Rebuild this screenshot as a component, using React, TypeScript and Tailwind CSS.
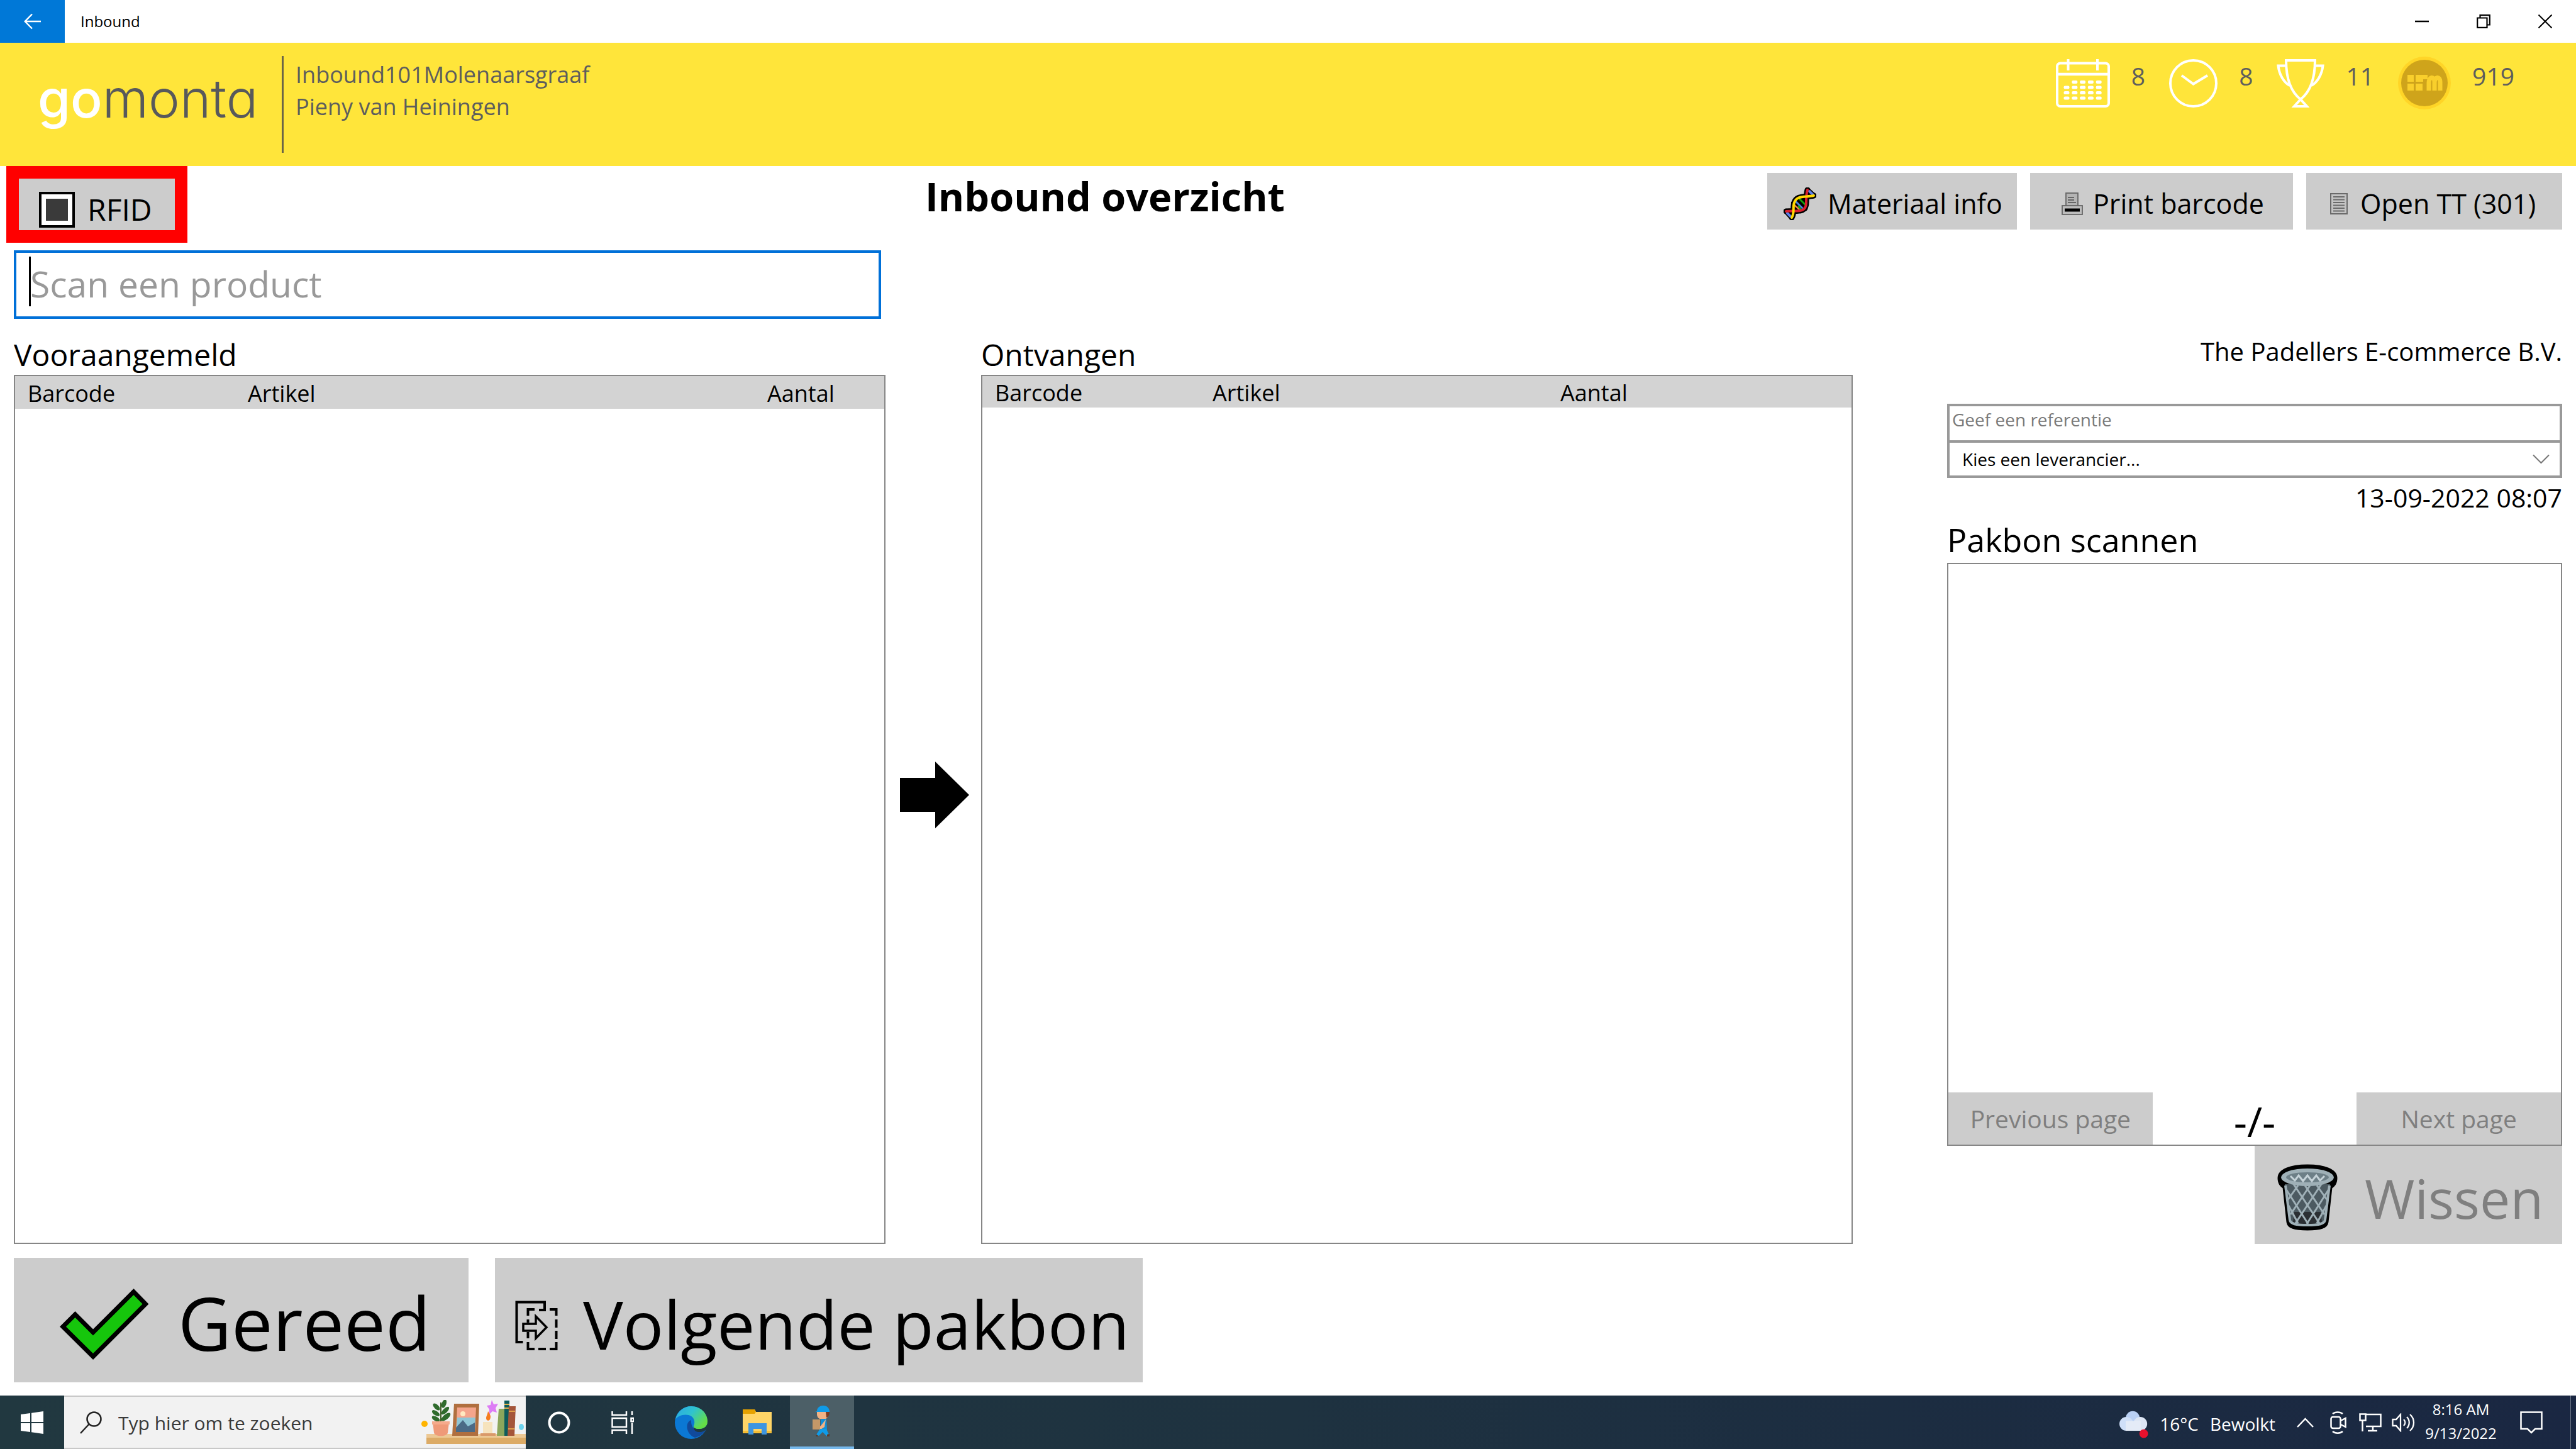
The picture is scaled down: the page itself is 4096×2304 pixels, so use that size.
import React from "react";

const winIcon = "block fill-none stroke-black";

function TitleBar() {
  return (
    <div className="flex h-[68px] items-stretch bg-white">
      <button aria-label="Back" className="flex w-[103px] items-center justify-center bg-[#0078d7]">
        <svg width="28" height="26" viewBox="0 0 28 26" className="fill-none stroke-white" strokeWidth="2.5">
          <path d="M27 13H2M13 1.5L1.8 13L13 24.5" />
        </svg>
      </button>
      <span className="ml-[25px] flex flex-1 items-center text-[24px] text-black">Inbound</span>
      <button aria-label="Minimize" className="flex w-[98px] items-center justify-center">
        <svg width="22" height="22" viewBox="0 0 22 22" className={winIcon} strokeWidth="2.5">
          <path d="M0 11H22" />
        </svg>
      </button>
      <button aria-label="Restore" className="flex w-[98px] items-center justify-center">
        <svg width="22" height="22" viewBox="0 0 22 22" className={winIcon} strokeWidth="2.2">
          <path d="M1.2 5.5H16.5V20.8H1.2ZM5.5 5V1.2H20.8V16.5H17" />
        </svg>
      </button>
      <button aria-label="Close" className="flex w-[98px] items-center justify-center">
        <svg width="22" height="22" viewBox="0 0 22 22" className={winIcon} strokeWidth="2">
          <path d="M0.5 0.5L21.5 21.5M21.5 0.5L0.5 21.5" />
        </svg>
      </button>
    </div>
  );
}

function CalendarIcon() {
  const dots: React.ReactNode[] = [];
  for (let r = 0; r < 4; r++)
    for (let c = 0; c < 5; c++)
      if (r > 0 || c > 0)
        dots.push(<rect key={`${r}-${c}`} x={12.5 + c * 12.8} y={34 + r * 8.5} width="9" height="5" rx="2" />);
  return (
    <svg width="86" height="77" viewBox="0 0 86 77" className="fill-white stroke-none">
      <rect x="2" y="6.5" width="82" height="68.5" rx="5" className="fill-none stroke-white" strokeWidth="4" />
      <path d="M2 24H84" className="stroke-white" strokeWidth="4.5" />
      <path d="M19.500 0V18M66 0V18" className="stroke-white" strokeWidth="4" />
      {dots}
    </svg>
  );
}

function ClockIcon() {
  return (
    <svg width="77" height="77" viewBox="0 0 77 77" className="fill-none stroke-white" strokeWidth="4">
      <circle cx="38.500" cy="38.500" r="36.500" />
      <path d="M20 26L38.500 39.500L61 26" />
    </svg>
  );
}

function TrophyIcon() {
  return (
    <svg width="76" height="77" viewBox="0 0 76 77" className="fill-none stroke-white" strokeWidth="4">
      <path d="M15 2H61C61 34 52 53 38 64C24 53 15 34 15 2Z" />
      <path d="M15 10.500H2.500C4 24 11 37 21 42M61 10.500H73.500C72 24 65 37 55 42" />
      <path d="M38 64L28 75H48Z" />
    </svg>
  );
}

function CoinIcon() {
  return (
    <svg width="84" height="84" viewBox="0 0 84 84">
      <circle cx="42" cy="42" r="42" fill="#ffd527" />
      <circle cx="42" cy="42" r="37" fill="#cfa41b" />
      <g fill="#f9cf2c">
        <rect x="15" y="29" width="10" height="11" />
        <rect x="15" y="43" width="10" height="11" />
        <rect x="28" y="29" width="12" height="11" />
        <rect x="28" y="43" width="11" height="11" />
      </g>
      <path d="M49 54V42C49 31 58 31 58 40V54M58 42C58 31 67 31 67 40V54M38 32.500H47" fill="none" stroke="#f9cf2c" strokeWidth="7" />
    </svg>
  );
}

function Banner() {
  const stats = [
    { label: "Dagen", icon: <CalendarIcon />, value: "8" },
    { label: "Uren", icon: <ClockIcon />, value: "8" },
    { label: "Prijzen", icon: <TrophyIcon />, value: "11" },
    { label: "Munten", icon: <CoinIcon />, value: "919" },
  ];
  return (
    <header className="flex h-[196px] items-start justify-between bg-[#ffe53a] text-[#5d5d5d]">
      <div className="flex items-start">
        <div className="mt-[33px] w-[389px] shrink-0 pl-[60px] font-['Inter'] text-[84px] leading-[112px] font-light [font-feature-settings:'cv11'] text-[#58595b]">
          <span className="font-medium text-white">go</span>monta
        </div>
        <div className="mt-[21px] ml-[59px] h-[154px] w-[3px] bg-[#6b6546]" />
        <div className="mt-[25px] ml-[19px] text-[36px] leading-[51px]">
          <div>Inbound101Molenaarsgraaf</div>
          <div>Pieny van Heiningen</div>
        </div>
      </div>
      <ul className="mt-[22px] mr-[98px] flex items-start gap-[38px]">
        {stats.map((s) => (
          <li key={s.label} className="flex items-start gap-[34px]">
            <span className="flex h-[84px] items-center">{s.icon}</span>
            <span className="text-[39px] leading-[62px]">{s.value}</span>
          </li>
        ))}
      </ul>
    </header>
  );
}

function DnaIcon() {
  return (
    <svg width="52" height="52" viewBox="0 0 52 52" fill="none" strokeLinecap="round" strokeLinejoin="round">
      <path d="M4 38C20 36 36 42 36 24C36 14 36 10 38 4M13 48C18 40 14 32 17 24C21 12 34 16 48 13" stroke="#000" strokeWidth="9" />
      <path d="M38 4L48 13M4 38L13 48" stroke="#000" strokeWidth="8" />
      <path d="M16 25L27 37M20 20L34 34M25 17L36 27" stroke="#000" strokeWidth="8" />
      <path d="M41 6L47 12M6 41L11 46" stroke="#5b7fe8" strokeWidth="4" />
      <path d="M17 28L25 35" stroke="#f0803c" strokeWidth="2.500" />
      <path d="M19 22L31 34" stroke="#4a7fe0" strokeWidth="3" />
      <path d="M26 19L36 29M24 30L28 36" stroke="#13a10e" strokeWidth="3" />
      <path d="M38 4C36 10 36 14 36 24C36 42 20 36 4 38" stroke="#d81e2c" strokeWidth="4" />
      <path d="M13 48C18 40 14 32 17 24C21 12 34 16 48 13" stroke="#ffd800" strokeWidth="4" />
    </svg>
  );
}

function PrinterIcon() {
  return (
    <svg width="34" height="36" viewBox="0 0 34 36" fill="none" stroke="#666" strokeWidth="1.800">
      <rect x="7" y="1" width="19" height="21" fill="#b4b4b4" />
      <path d="M10 12H20M10 16H23M10 8H20" />
      <rect x="1" y="21" width="32" height="14" fill="#bdbdbd" />
      <path d="M5 28H29" stroke="#000" strokeWidth="5" />
    </svg>
  );
}

function DocIcon() {
  return (
    <svg width="28" height="34" viewBox="0 0 28 34" fill="none" stroke="#6a6a6a" strokeWidth="2">
      <rect x="1" y="1" width="26" height="32" fill="#c4c4c4" />
      <path d="M5 6H23M5 10.500H23M5 15H23M5 19.500H23M5 24H23M5 28.500H23" />
    </svg>
  );
}

function ToolButton(props: { icon: React.ReactNode; text: string; className: string }) {
  return (
    <button className={`flex h-[90px] items-center bg-[#cccccc] pt-[8px] text-[43px] leading-[60px] text-black ${props.className}`}>
      {props.icon}
      <span>{props.text}</span>
    </button>
  );
}

function ListTable(props: { title: string; barcode: string; artikel: string; head: string }) {
  return (
    <section className="flex flex-col">
      <h2 className="mt-[25px] text-[48px] leading-[64px]">{props.title}</h2>
      <div className="flex-1 border-2 border-[#868686] bg-white">
        <table className="w-full table-fixed text-left text-[36px]">
          <thead>
            <tr className={`bg-[#d3d3d3] ${props.head}`}>
              <th className={`pt-[3px] pl-[20px] leading-[44px] font-normal ${props.barcode}`}>Barcode</th>
              <th className={`pt-[3px] pl-[20px] leading-[44px] font-normal ${props.artikel}`}>Artikel</th>
              <th className="pt-[3px] pl-[20px] leading-[44px] font-normal">Aantal</th>
            </tr>
          </thead>
        </table>
      </div>
    </section>
  );
}

function TrashIcon() {
  return (
    <svg width="98" height="106" viewBox="0 0 98 106">
      <path d="M49 3C22 3 4 10 4 22C4 31 8 34 12 37L18 92C19 100 28 103 49 103C70 103 79 100 80 92L86 37C90 34 94 31 94 22C94 10 76 3 49 3Z" fill="#000" stroke="#000" strokeWidth="5" />
      <path d="M13 32L21 89C22 95 30 97 49 97C68 97 76 95 77 89L85 32Z" fill="#4c5a61" />
      <path d="M28 76H70L72 92C60 97 38 97 26 92Z" fill="#2b2f33" />
      <g fill="none" stroke="#9fb0b7" strokeWidth="3">
        <path d="M14 34L21 89C22 95 30 97 49 97C68 97 76 95 77 89L84 34" strokeWidth="4" />
        <path d="M27 32L68 94M45 34L76 80M64 34L81 58M15 40L50 95M19 66L34 94" />
        <path d="M71 32L30 94M53 34L22 80M34 34L17 58M83 40L48 95M79 66L64 94" />
      </g>
      <ellipse cx="49" cy="21" rx="42" ry="14" fill="#9fb0b7" />
      <ellipse cx="49" cy="21" rx="34" ry="8" fill="#6d7f87" />
      <path d="M22 19L29 26L35 18L42 27L49 18L56 27L63 18L69 26L76 19" fill="none" stroke="#c5d2d8" strokeWidth="3" />
    </svg>
  );
}

function CheckIcon() {
  return (
    <svg width="142" height="114" viewBox="0 0 142 114">
      <path d="M5 60.500L24.500 41L53 69.500L117.500 5L136.500 24.500L53 108Z" fill="#16c60c" stroke="#000" strokeWidth="7" />
    </svg>
  );
}

function CopyIcon() {
  return (
    <svg width="68" height="80" viewBox="0 0 68 80" fill="none" stroke="#000" strokeWidth="4">
      <path d="M12.500 66H2.500V2.500H47V15H38" />
      <path d="M20.500 24V14H31M55 14H65.500V24M65.500 30V43M65.500 48V61M65.500 66V77H55M49 77H37M31 77H20.500V66M20.500 60V50M20.500 35V30" />
      <path d="M13 37H33V25L50 42.500L33 60V48H13Z" strokeWidth="3.500" />
    </svg>
  );
}

function PackingSlip() {
  return (
    <section className="flex flex-col">
      <div className="mt-[22px] text-right text-[40px] leading-[60px]">The Padellers E-commerce B.V.</div>
      <input
        aria-label="Referentie"
        placeholder="Geef een referentie"
        className="mt-[53px] block h-[62px] border-4 border-[#999999] bg-white px-[4px] pb-[12px] text-[28px] outline-none placeholder:text-[#7a7a7a]"
      />
      <div className="relative -mt-[4px]">
        <select
          aria-label="Leverancier"
          className="block h-[60px] w-full appearance-none border-4 border-[#999999] bg-white px-[20px] text-[28px] text-black outline-none"
        >
          <option>Kies een leverancier...</option>
        </select>
        <svg width="27" height="16" viewBox="0 0 27 16" className="pointer-events-none absolute top-[22px] right-[20px] fill-none stroke-[#777777]" strokeWidth="2">
          <path d="M1 1.500L13.500 14L26 1.500" />
        </svg>
      </div>
      <div className="text-right text-[41px] leading-[62px]">13-09-2022 08:07</div>
      <h2 className="mt-[4px] text-[52px] leading-[64px]">Pakbon scannen</h2>
      <div className="mt-[5px] flex flex-1 flex-col justify-end border-2 border-[#868686] bg-white">
        <div className="grid h-[83px] grid-cols-3">
          <button disabled className="bg-[#cccccc] pt-[2px] text-[39px] text-[#7f7f7f]">
            Previous page
          </button>
          <span className="pt-[15px] text-center text-[66px] leading-[60px]">-/-</span>
          <button disabled className="bg-[#cccccc] pt-[2px] text-[39px] text-[#7f7f7f]">
            Next page
          </button>
        </div>
      </div>
      <button disabled className="flex h-[156px] w-1/2 items-center self-end bg-[#cccccc] pt-[8px] pl-[35px] text-[86px] text-[#7f7f7f]">
        <TrashIcon />
        <span className="ml-[42px]">Wissen</span>
      </button>
    </section>
  );
}

function ShelfArt() {
  return (
    <svg width="166" height="72" viewBox="0 0 166 72">
      <circle cx="5" cy="38" r="5" fill="#ffb400" />
      <rect x="8" y="54" width="158" height="8" fill="#ecc894" />
      <rect x="8" y="60" width="158" height="10" fill="#dcab66" />
      <path d="M31 36V4" stroke="#3b5b23" strokeWidth="2" />
      <g fill="#2f6b2c">
        <ellipse cx="36" cy="6" rx="3.500" ry="7" transform="rotate(20 36 6)" />
        <ellipse cx="24" cy="11" rx="3.500" ry="7" transform="rotate(-45 24 11)" />
        <ellipse cx="38" cy="17" rx="3.500" ry="8" transform="rotate(45 38 17)" />
        <ellipse cx="23" cy="21" rx="3.500" ry="7" transform="rotate(-55 23 21)" />
        <ellipse cx="39" cy="27" rx="4" ry="9" transform="rotate(50 39 27)" />
        <ellipse cx="23" cy="30" rx="3.500" ry="7" transform="rotate(-60 23 30)" />
      </g>
      <path d="M18 35H44L42 52C41 59 21 59 20 52Z" fill="#ef9a78" />
      <rect x="17" y="34" width="28" height="5" fill="#f5ab8c" />
      <path d="M52 6H92L90 57H49Z" fill="#b06f3f" />
      <path d="M57 12H87L85 51H55Z" fill="#f4a58c" />
      <path d="M57 28H86L85 51H55Z" fill="#8fc6d6" />
      <path d="M55 44L66 32L74 42L85 36V51H55Z" fill="#4b6a86" />
      <circle cx="66" cy="22" r="4" fill="#ffe9c0" />
      <path d="M112 0L115 7L122 6L118 13L120 20L113 18L108 23L108 15L104 9L110 8Z" fill="#dd7cf5" />
      <rect x="98" y="35" width="15" height="21" fill="#f6e3bd" />
      <rect x="94" y="53" width="24" height="4" fill="#d9996a" />
      <path d="M106 18C110 24 111 26 109 31C107 34 103 33 103 29C103 26 105 24 106 18Z" fill="#f57c1f" />
      <path d="M123 14H133V57H120Z" fill="#8ca65c" />
      <rect x="132" y="1" width="8" height="56" fill="#0f5b5c" />
      <path d="M132 7H140M132 13H140" stroke="#e0b04a" strokeWidth="2" />
      <path d="M139 10H150L148 57H137Z" fill="#a4553a" />
      <path d="M139 18H149M138 46H148" stroke="#e0a04a" strokeWidth="2" />
      <ellipse cx="159" cy="43" rx="4" ry="5" fill="#6ed3ee" />
    </svg>
  );
}

function EdgeIcon() {
  return (
    <svg width="52" height="52" viewBox="0 0 52 52">
      <defs>
        <linearGradient id="edgeTop" x1="0" y1="0" x2="1" y2="0.6">
          <stop offset="0" stopColor="#2ba7e6" />
          <stop offset="0.5" stopColor="#2fc3cf" />
          <stop offset="1" stopColor="#66dd45" />
        </linearGradient>
      </defs>
      <circle cx="26" cy="26" r="26" fill="#0b78d4" />
      <path d="M1 21C4 8 14 0 26 0C41 0 52 11 52 24C52 32 46 36 39 36C33 36 29 34 30 31C32 28 33 17 22 14C13 12 4 16 1 21Z" fill="url(#edgeTop)" />
      <path d="M26 22C16 25 17 44 32 50C40 48 46 43 49 38C38 43 25 38 26 22Z" fill="#114a9b" />
      <path d="M52 24C52 32 46 36 39 36C33 36 29 34 30 31C28 41 40 44 49 38L54 34Z" fill="#203840" />
      <path d="M52 24C52 32 46 36 39 36C33 36 29 34 30 31C30 33 38 34 44 32C49 30 52 27 52 24Z" fill="#5fdc48" />
    </svg>
  );
}

function CourierIcon() {
  return (
    <svg width="32" height="50" viewBox="0 0 32 50">
      <path d="M8 9C8 3 13 0 18 0C24 0 28 4 28 10L26 12L5 10Z" fill="#0f9be8" />
      <path d="M8 10H25V16C25 20 22 22 17 22C12 22 8 19 8 14Z" fill="#f0b285" />
      <path d="M22 10H28C28 15 26 18 23 19Z" fill="#7a3b22" />
      <path d="M14 21H23L24 38H14Z" fill="#0f8fd8" />
      <path d="M22 22L20 34L12 39L10 36L15 31Z" fill="#f0b285" />
      <rect x="1" y="22" width="12" height="16" fill="#c49868" />
      <path d="M13 37H23L27 46L24 49L17 42L11 48L7 46Z" fill="#0f9be8" />
      <path d="M24 46L28 45L28 49H24ZM7 46L11 49H6Z" fill="#5c3a28" />
    </svg>
  );
}

const task = "flex w-[105px] items-center justify-center";

function Taskbar() {
  return (
    <footer className="flex h-[85px] items-stretch bg-linear-to-r from-[#213840] via-[#1e3240] to-[#1a2742] text-white">
      <button aria-label="Start" className="flex w-[102px] items-center justify-center">
        <svg width="36" height="36" viewBox="0 0 36 36" fill="#fff">
          <path d="M0 5L15 3V17H0ZM17 2.700L36 0V17H17ZM0 19H15V33L0 31ZM17 19H36V36L17 33.300Z" />
        </svg>
      </button>
      <label className="flex w-[734px] items-center border-y-2 border-[#c8c8c8] bg-[#f2f2f2] pl-[25px]">
        <svg width="36" height="36" viewBox="0 0 36 36" fill="none" stroke="#222" strokeWidth="2.500">
          <circle cx="22.500" cy="12.500" r="11" />
          <path d="M14.500 20.500L1 35" />
        </svg>
        <input
          aria-label="Zoeken"
          placeholder="Typ hier om te zoeken"
          className="ml-[25px] w-0 flex-1 bg-transparent pt-[2px] text-[30px] outline-none placeholder:text-[#3a3a3a]"
        />
        <ShelfArt />
      </label>
      <button aria-label="Cortana" className={task}>
        <svg width="38" height="38" viewBox="0 0 38 38" fill="none" stroke="#fff" strokeWidth="4">
          <circle cx="19" cy="19" r="15.500" />
        </svg>
      </button>
      <button aria-label="Task view" className={`${task} pr-[8px]`}>
        <svg width="36" height="36" viewBox="0 0 36 36" fill="none" stroke="#fff" strokeWidth="2.500">
          <path d="M1.500 0V6H24V0M1.500 36V30H24V36M33 0V6M33 18V36" />
          <rect x="1.500" y="11" width="22.500" height="14" />
          <rect x="31.500" y="11" width="4" height="5" />
        </svg>
      </button>
      <button aria-label="Edge" className={task}>
        <EdgeIcon />
      </button>
      <button aria-label="Verkenner" className={task}>
        <svg width="48" height="42" viewBox="0 0 48 42">
          <path d="M1 0H20L22 4H47V38H1Z" fill="#ffd567" />
          <path d="M1 0H20L22 4L20 7H1Z" fill="#e5a100" />
          <path d="M1 34H47V38H1Z" fill="#f5bd35" />
          <path d="M10 22H39V40H31V31H18V40H10Z" fill="#3e95e0" />
        </svg>
      </button>
      <button aria-label="Inbound" className="flex w-[102px] items-center justify-center border-b-4 border-[#76b9ed] bg-[#4c5f67]">
        <CourierIcon />
      </button>
      <div className="ml-auto flex items-center">
        <svg width="52" height="46" viewBox="0 0 52 50" className="mt-[4px]">
          <circle cx="24" cy="15" r="12" fill="#b9d0f5" />
          <circle cx="13" cy="25" r="12" fill="#cfdff8" />
          <circle cx="37" cy="25" r="12" fill="#dde6f5" />
          <rect x="12" y="20" width="26" height="17" fill="#e4ebf7" />
          <circle cx="43" cy="42" r="7.500" fill="#e8112d" />
        </svg>
        <span className="ml-[15px] pt-[4px] text-[28px]">16°C</span>
        <span className="ml-[18px] pt-[4px] text-[28px]">Bewolkt</span>
        <svg width="27" height="16" viewBox="0 0 27 16" className="ml-[34px] fill-none stroke-white" strokeWidth="2.500">
          <path d="M1 15L13.500 2L26 15" />
        </svg>
        <svg width="26" height="36" viewBox="0 0 26 36" className="ml-[26px] fill-none stroke-white" strokeWidth="2.500">
          <rect x="1.500" y="9" width="15" height="18" rx="3" />
          <path d="M17 15L24.500 11V25L17 21M4 4C8 0.500 16 0.500 20 4M4 32C8 35.500 16 35.500 20 32" />
        </svg>
        <svg width="36" height="30" viewBox="0 0 36 30" className="ml-[20px] fill-none stroke-white" strokeWidth="2.500">
          <path d="M11 2H34.500V21H11M22 21V28M14 28H29M5.500 12V29" />
          <rect x="1.500" y="1.500" width="9" height="10" />
        </svg>
        <svg width="38" height="30" viewBox="0 0 38 30" className="ml-[16px] fill-none stroke-white" strokeWidth="2.300">
          <path d="M1.500 10H7L14 2V28L7 20H1.500ZM19 10C22 13 22 17 19 20M24 6C29 11 29 19 24 24M29 2C37 9 37 21 29 28" />
        </svg>
        <div className="mr-[2px] ml-[10px] w-[124px] pb-[3px] text-center text-[24px] leading-[38px]">
          <div>8:16 AM</div>
          <div>9/13/2022</div>
        </div>
        <button aria-label="Meldingen" className="ml-[30px]">
          <svg width="36" height="36" viewBox="0 0 36 36" fill="none" stroke="#fff" strokeWidth="2.500">
            <path d="M1.500 1.500H34.500V28H24L18 34L12 28H1.500Z" />
          </svg>
        </button>
        <div className="mr-[8px] ml-[44px] h-[85px] w-px bg-[#6d7688]" />
      </div>
    </footer>
  );
}

export default function App() {
  return (
    <div className="flex min-h-screen flex-col bg-white font-['Open_Sans','Noto_Sans',sans-serif] text-black">
      <TitleBar />
      <Banner />
      <main className="flex flex-1 flex-col px-[22px] pb-[21px]">
        <div className="grid grid-cols-[1449fr_2603fr]">
          <div>
            <div className="-ml-[12px] w-[288px] border-[20px] border-[#ff0000] bg-[#cccccc]">
              <label className="flex h-[82px] items-center pt-[16px] pl-[32px] text-[48px] leading-[60px]">
                <input
                  type="checkbox"
                  className="size-[57px] shrink-0 appearance-none border-4 border-black bg-[#3a3a3a] shadow-[inset_0_0_0_7px_white]"
                />
                <span className="ml-[20px]">RFID</span>
              </label>
            </div>
            <div className="relative mt-[12px] w-[1379px] max-w-full">
              <input
                aria-label="Scan een product"
                placeholder="Scan een product"
                className="block h-[109px] w-full border-4 border-[#0070d8] bg-white px-[22px] pb-[4px] text-[57px] outline-none placeholder:text-[#999999]"
              />
              <span className="absolute top-[10px] left-[24px] h-[79px] w-[3px] bg-black" />
            </div>
          </div>
          <div className="flex items-start justify-between">
            <h1 className="mt-[8px] text-[63px] leading-[80px] font-bold">Inbound overzicht</h1>
            <div className="mt-[11px] flex gap-[21px]">
              <ToolButton icon={<DnaIcon />} text="Materiaal info" className="w-[397px] gap-[18px] pl-[26px]" />
              <ToolButton icon={<PrinterIcon />} text="Print barcode" className="w-[418px] gap-[16px] pl-[50px]" />
              <ToolButton icon={<DocIcon />} text="Open TT (301)" className="w-[407px] gap-[20px] pl-[38px]" />
            </div>
          </div>
        </div>
        <div className="grid flex-1 grid-cols-[1386fr_152fr_1386fr_150fr_978fr]">
          <ListTable title="Vooraangemeld" barcode="w-[350px]" artikel="w-[826px]" head="h-[52px]" />
          <div className="flex items-center justify-center pt-[43px] pl-[4px]">
            <svg width="110" height="106" viewBox="0 0 110 106">
              <path d="M0 26H56V0L110 53L56 106V80H0Z" />
            </svg>
          </div>
          <ListTable title="Ontvangen" barcode="w-[346px]" artikel="w-[553px]" head="h-[50px]" />
          <div />
          <PackingSlip />
        </div>
        <div className="mt-[22px] flex gap-[42px]">
          <button className="flex h-[198px] w-[723px] items-center bg-[#cccccc] pt-[14px] pl-[73px] text-[117px] leading-none">
            <CheckIcon />
            <span className="ml-[46px] pb-[8px]">Gereed</span>
          </button>
          <button className="flex h-[198px] w-[1030px] items-center bg-[#cccccc] pt-[18px] pl-[32px] text-[107px] leading-none">
            <CopyIcon />
            <span className="ml-[40px] pb-[8px]">Volgende pakbon</span>
          </button>
        </div>
      </main>
      <Taskbar />
    </div>
  );
}
